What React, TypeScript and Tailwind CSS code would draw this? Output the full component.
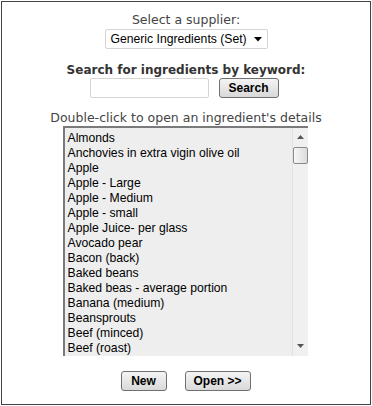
import React from 'react';

const ITEMS = [
  'Almonds',
  'Anchovies in extra vigin olive oil',
  'Apple',
  'Apple - Large',
  'Apple - Medium',
  'Apple - small',
  'Apple Juice- per glass',
  'Avocado pear',
  'Bacon (back)',
  'Baked beans',
  'Baked beas - average portion',
  'Banana (medium)',
  'Beansprouts',
  'Beef (minced)',
  'Beef (roast)',
];

const verdana = { fontFamily: '"DejaVu Sans", Verdana, sans-serif' };

function Btn({ children, className = '' }: { children: React.ReactNode; className?: string }) {
  return (
    <button
      className={`h-[20px] rounded-[3px] border border-[#707070] bg-gradient-to-b from-[#f4f4f4] to-[#d9d9d9] text-[12px] font-bold text-black font-['Liberation_Sans',Arial,sans-serif] leading-none ${className}`}
    >
      {children}
    </button>
  );
}

export default function App() {
  return (
    <div className="w-[372px] h-[406px] bg-white p-px">
      <div className="h-full border border-[#444] flex flex-col items-center pt-[10px]">
        <div className="text-[12.5px] leading-[16px] text-[#444]" style={verdana}>
          Select a supplier:
        </div>
        <div className="mt-[1px] w-[163px] h-[20px] border border-[#d5d5d5] rounded-[2px] flex items-center justify-between pl-[5px] pr-[5px] font-['Liberation_Sans',Arial,sans-serif] text-[12.2px] text-black whitespace-nowrap">
          <span>Generic Ingredients (Set)</span>
          <svg width="8" height="5" viewBox="0 0 8 5">
            <path d="M0 0h8L4 4.5z" fill="#000" />
          </svg>
        </div>

        <div className="mt-[14px] text-[12px] leading-[15px] font-bold text-[#333]" style={verdana}>
          Search for ingredients by keyword:
        </div>
        <div className="flex items-center gap-[10px] ml-[-4px]">
          <input className="w-[119px] h-[20px] border border-[#d5d5d5] rounded-[2px] outline-none" />
          <Btn className="w-[60px]">Search</Btn>
        </div>

        <div className="mt-[12px] text-[12.5px] leading-[16px] text-[#444]" style={verdana}>
          Double-click to open an ingredient's details
        </div>
        <div className="ml-[-2px] w-[245px] h-[230px] bg-[#eeeeee] border-l-2 border-t-2 border-[#7a7a7a] flex">
          <div className="flex-1 pt-[3px] pl-[3px] overflow-hidden font-['Liberation_Sans',Arial,sans-serif] text-[12.2px] leading-[15px] text-black">
            {ITEMS.map((it) => (
              <div key={it} className="whitespace-nowrap">{it}</div>
            ))}
          </div>
          <div className="w-[16px] bg-[#f0f0f0] border-l border-[#e2e2e2] flex flex-col items-center">
            <svg className="mt-[7px]" width="7" height="4" viewBox="0 0 7 4">
              <path d="M3.5 0L7 4H0z" fill="#555" />
            </svg>
            <div className="mt-[8px] w-[15px] h-[17px] border border-[#8a8a8a] rounded-[2px] bg-gradient-to-r from-[#f7f7f7] to-[#dcdcdc]" />
            <div className="flex-1" />
            <svg className="mb-[8px]" width="7" height="4" viewBox="0 0 7 4">
              <path d="M0 0h7L3.5 4z" fill="#555" />
            </svg>
          </div>
        </div>

        <div className="mt-[15px] flex gap-[18px] ml-[-1px]">
          <Btn className="w-[46px]">New</Btn>
          <Btn className="w-[66px]">Open &gt;&gt;</Btn>
        </div>
      </div>
    </div>
  );
}
